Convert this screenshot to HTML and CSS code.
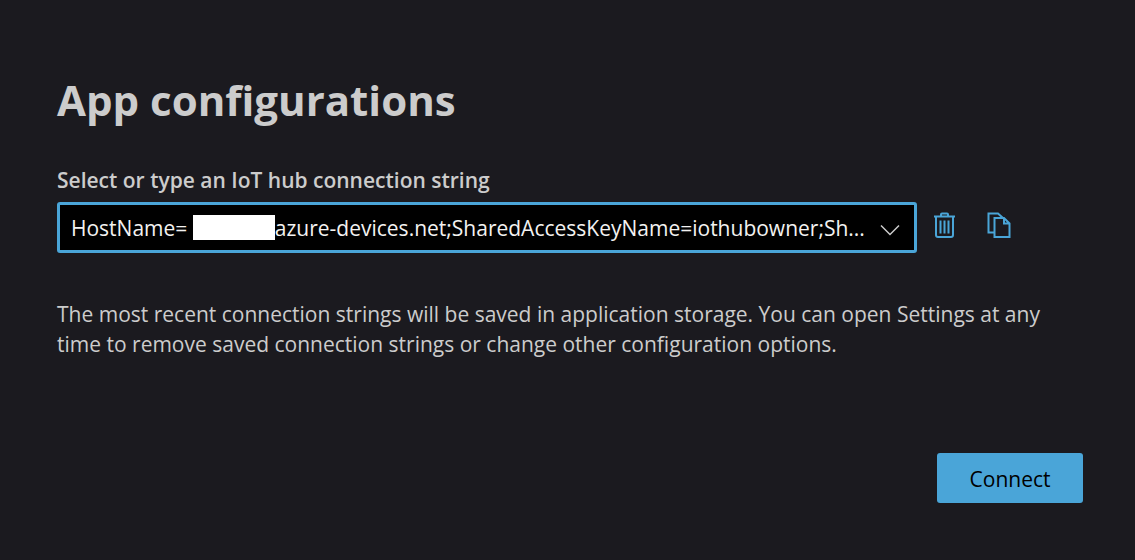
FILE: index.html
```html
<!DOCTYPE html>
<html lang="en">
<head>
<meta charset="utf-8">
<meta name="viewport" content="width=device-width, initial-scale=1">
<title>App configurations</title>
<link rel="stylesheet" href="styles.css">
</head>
<body>
<main class="dialog">
  <h1 class="title">App configurations</h1>
  <label class="label" for="connection">Select or type an IoT hub connection string</label>
  <div class="row">
    <div class="combo">
      <select class="select" id="connection">
        <option>HostName=&emsp;&emsp;&emsp;&emsp;&thinsp;azure-devices.net;SharedAccessKeyName=iothubowner;Sh...</option>
      </select>
      <span class="mask"></span>
      <svg class="chevron" width="20" height="12" viewBox="0 0 20 12" aria-hidden="true"><path d="M1 1.5 10 10.500 19 1.500"/></svg>
    </div>
    <div class="actions">
      <button class="icon-button" type="button" aria-label="Delete">
        <svg width="24" height="28" viewBox="0 0 24 28" aria-hidden="true"><path d="M1 5.500H22M8 5V3.500Q8 2.500 9 2.500H14Q15 2.500 15 3.500V5M3 6V24Q3 26 5 26H18Q20 26 20 24V6"/><path class="thin" d="M7.500 9.500V22.500M11.500 9.500V22.500M15.500 9.500V22.500"/></svg>
      </button>
      <button class="icon-button" type="button" aria-label="Copy">
        <svg width="24" height="28" viewBox="0 0 24 28" aria-hidden="true"><path d="M7 21.500H1.500V2.500H11L16 7M7.500 7H17L22.500 12.500V26H7.500ZM17 7V12.500H22.500"/></svg>
      </button>
    </div>
  </div>
  <p class="note">The most recent connection strings will be saved in application storage. You can open Settings at any time to remove saved connection strings or change other configuration options.</p>
  <div class="footer"><button class="connect" type="button">Connect</button></div>
</main>
</body>
</html>
```
FILE: styles.css
```css
* { box-sizing: border-box; }
body {
  margin: 0;
  min-height: 100vh;
  background: #1b1a1f;
  color: #cccccc;
  font-family: "Open Sans", "Noto Sans", sans-serif;
  font-size: 21px;
}
.dialog {
  display: flex;
  flex-direction: column;
  padding: 71px 52px 56px 57px;
}
.title {
  margin: 0 0 36px;
  font-size: 42px;
  line-height: 58px;
  font-weight: 700;
}
.label {
  margin-bottom: 7px;
  font-weight: 600;
  line-height: 30px;
}
.row {
  display: flex;
  gap: 16px;
}
.combo {
  position: relative;
  flex: 1;
}
.select {
  appearance: none;
  display: block;
  width: 100%;
  height: 51px;
  padding: 0 44px 0 11px;
  border: 3px solid #4aa5d8;
  border-radius: 3px;
  outline: none;
  background: #000;
  color: #f3f2f1;
  font: inherit;
}
.mask {
  position: absolute;
  left: 136px;
  top: 13px;
  width: 82px;
  height: 25px;
  background: #fff;
  pointer-events: none;
}
.chevron {
  position: absolute;
  right: 17px;
  top: 22px;
  fill: none;
  stroke: #cccccc;
  stroke-width: 1.5;
  pointer-events: none;
}
.actions {
  display: flex;
  gap: 30px;
  padding: 9px 72px 0 0;
}
.icon-button {
  display: flex;
  width: 24px;
  height: 28px;
  padding: 0;
  border: 0;
  background: none;
  cursor: pointer;
}
.icon-button svg {
  fill: none;
  stroke: #4aa5d8;
  stroke-width: 2;
}
.icon-button .thin { stroke-width: 2; }
.note {
  margin: 46px 0 0;
  line-height: 30px;
}
.footer {
  display: flex;
  justify-content: flex-end;
  margin-top: 94px;
}
.connect {
  min-width: 146px;
  height: 50px;
  padding: 2px 0 0;
  border: 0;
  border-radius: 3px;
  background: #4aa5d8;
  color: #000;
  font: inherit;
  cursor: pointer;
}
```
